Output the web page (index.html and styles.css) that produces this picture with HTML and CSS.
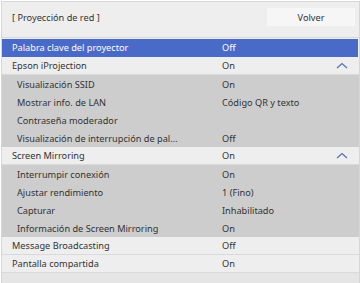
FILE: index.html
```html
<!DOCTYPE html>
<html lang="es">
<head>
  <meta charset="UTF-8">
  <meta name="viewport" content="width=device-width, initial-scale=1.0">
  <title>Proyección de red</title>
  <link rel="stylesheet" href="styles.css">
</head>
<body>
  <div id="menu">
    <div class="header">
      <span class="title">[ Proyección de red ]</span>
      <button class="back-btn">Volver</button>
    </div>
    <div class="list">
      <div class="row selected"><span class="label">Palabra clave del proyector</span><span class="value">Off</span></div>
      <div class="row"><span class="label">Epson iProjection</span><span class="value">On</span>
        <svg class="caret" width="12" height="7" viewBox="0 0 12 7"><polyline points="1,6 6,1.5 11,6" fill="none" stroke="#5b6fb4" stroke-width="1.3"/></svg>
      </div>
      <div class="group">
        <div class="row sub"><span class="label">Visualización SSID</span><span class="value">On</span></div>
        <div class="row sub"><span class="label">Mostrar info. de LAN</span><span class="value">Código QR y texto</span></div>
        <div class="row sub"><span class="label">Contraseña moderador</span><span class="value"></span></div>
        <div class="row sub"><span class="label">Visualización de interrupción de pal...</span><span class="value">Off</span></div>
      </div>
      <div class="row"><span class="label">Screen Mirroring</span><span class="value">On</span>
        <svg class="caret" width="12" height="7" viewBox="0 0 12 7"><polyline points="1,6 6,1.5 11,6" fill="none" stroke="#5b6fb4" stroke-width="1.3"/></svg>
      </div>
      <div class="group">
        <div class="row sub"><span class="label">Interrumpir conexión</span><span class="value">On</span></div>
        <div class="row sub"><span class="label">Ajustar rendimiento</span><span class="value">1 (Fino)</span></div>
        <div class="row sub"><span class="label">Capturar</span><span class="value">Inhabilitado</span></div>
        <div class="row sub"><span class="label">Información de Screen Mirroring</span><span class="value">On</span></div>
      </div>
      <div class="row"><span class="label">Message Broadcasting</span><span class="value">Off</span></div>
      <div class="row"><span class="label">Pantalla compartida</span><span class="value">On</span></div>
      <div class="row empty"></div>
    </div>
  </div>
</body>
</html>
```

FILE: styles.css
```css
* { margin: 0; padding: 0; box-sizing: border-box; }
html, body { width: 100%; height: 100%; background: #ffffff; overflow: hidden; }
body { font-family: "Noto Sans", "Open Sans", sans-serif; font-size: 9.2px; color: #333; }
#menu { width: 359px; height: 283px; margin: 1px 0 0 1px; background: #eeeeee; border-left: 1px solid #d6d6d6; border-top: 1px solid #d6d6d6; border-right: 1px solid #d6d6d6; }
.header { height: 36px; display: flex; align-items: center; justify-content: space-between; padding: 0 4px 5px 10px; border-bottom: 1px solid #d8d8d8; }
.title { color: #333; }
.back-btn { width: 88px; height: 18px; background: #f6f6f6; border: none; font-family: inherit; font-size: 9.2px; color: #333; }
.list { padding-top: 1px; }
.row { height: 18px; display: flex; align-items: center; padding-left: 10px; border-bottom: 1px solid #dadada; position: relative; }
.row .label { width: 210px; white-space: nowrap; overflow: hidden; }
.row .value { flex: 1; }
.row.selected { background: #4a6ac8; color: #fff; border-bottom-color: #4a6ac8; margin-right: 1px; }
.group { background: #cdcdcd; }
.row.sub { padding-left: 15px; border-bottom: none; }
.row.sub .label { width: 205px; }
.caret { position: absolute; right: 11px; top: 5px; }
.row.empty { background: #e5e5e5; border-bottom: none; }
```
